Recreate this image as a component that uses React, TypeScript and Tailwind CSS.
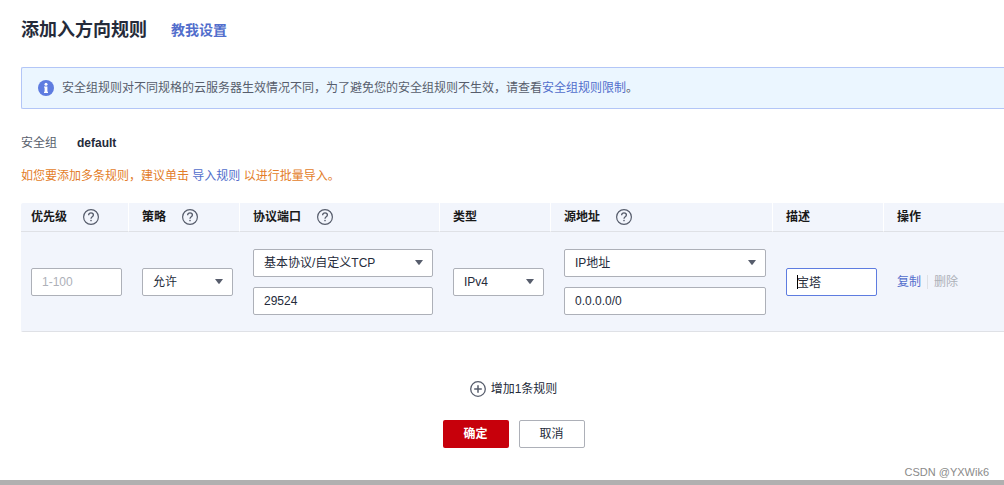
import React, { useState } from 'react';

const fieldClass =
    "h-7 w-full rounded-xs border border-[#adb0b8] bg-white px-2.5 text-xs text-[#252b3a] outline-none placeholder:text-[#adb0b8]";

function HelpIcon() {
    return (
        <svg className="size-4 shrink-0" viewBox="0 0 16 16" fill="none" stroke="#575d6c" aria-hidden="true">
            <circle cx="8" cy="8" r="7.4" strokeWidth="1.2" />
            <path d="M5.6 6.3C5.6 4.7 6.6 3.9 8 3.9s2.4.9 2.4 2.2c0 1.7-2.4 1.8-2.4 3.6" strokeWidth="1.3" />
            <circle cx="8" cy="11.6" r="0.8" fill="#575d6c" stroke="none" />
        </svg>
    );
}

function InfoIcon() {
    return (
        <svg className="size-4 shrink-0" viewBox="0 0 16 16" aria-hidden="true">
            <circle cx="8" cy="8" r="8" fill="#5e7ce0" />
            <circle cx="8" cy="4.2" r="1.5" fill="#fff" />
            <path d="M6 6.4h3.4v5.4h.6V13H6v-1.2h.6V7.6H6z" fill="#fff" />
        </svg>
    );
}

function AddIcon() {
    return (
        <svg className="size-4 shrink-0" viewBox="0 0 16 16" fill="none" stroke="#575d6c" aria-hidden="true">
            <circle cx="8" cy="8" r="7.3" strokeWidth="1.3" />
            <path d="M4.2 8h7.6M8 4.2v7.6" strokeWidth="1.5" />
        </svg>
    );
}

interface SelectFieldProps {
    label: string;
    options: string[];
}

function SelectField({ label, options }: SelectFieldProps) {
    return (
        <div className="grid items-center">
            <select aria-label={label} className={`${fieldClass} col-start-1 row-start-1 appearance-none`}>
                {options.map((option) => (
                    <option key={option}>{option}</option>
                ))}
            </select>
            <svg
                className="pointer-events-none col-start-1 row-start-1 mr-2.5 h-[5px] w-2 justify-self-end"
                viewBox="0 0 8 5"
                aria-hidden="true"
            >
                <path d="M0 0h8L4.6 4.6q-.6.6-1.2 0z" fill="#575d6c" />
            </svg>
        </div>
    );
}

const columns = [
    { title: "优先级", help: true, className: "w-[108px] pl-2.5" },
    { title: "策略", help: true, className: "w-[111px] pl-[13px]" },
    { title: "协议端口", help: true, className: "w-[200px] pl-[13px]" },
    { title: "类型", help: false, className: "w-[111px] pl-[13px]" },
    { title: "源地址", help: true, className: "w-[222px] pl-[13px]" },
    { title: "描述", help: false, className: "w-[111px] pl-[13px]" },
    { title: "操作", help: false, className: "pl-[13px]" },
];

export default function App() {
    const [priority, setPriority] = useState('');
    const [port, setPort] = useState('29524');
    const [source, setSource] = useState('0.0.0.0/0');
    const [description, setDescription] = useState('宝塔');

    return (
        <div className="overflow-hidden bg-white font-['Liberation_Sans','Noto_Sans_CJK_SC',sans-serif] text-xs text-[#252b3a]">
            <main className="pl-[21px]">
                <header className="flex items-center gap-6 pt-4">
                    <h1 className="text-lg font-bold">添加入方向规则</h1>
                    <a href="#guide" className="text-sm font-bold text-[#526ecc]">教我设置</a>
                </header>

                {/* Notice */}
                <div className="mt-[23px] flex h-[42px] items-center gap-2 rounded-l-xs border border-r-0 border-[#b3c6f7] bg-[#ebf6ff] pl-4 text-[#575d6c]">
                    <InfoIcon />
                    <p>
                        安全组规则对不同规格的云服务器生效情况不同，为了避免您的安全组规则不生效，请查看
                        <a href="#limits" className="text-[#526ecc]">安全组规则限制</a>。
                    </p>
                </div>

                <dl className="mt-[26px] flex gap-5">
                    <dt className="text-[#575d6c]">安全组</dt>
                    <dd className="font-bold">default</dd>
                </dl>

                <p className="mt-[17px] text-[#e37d29]">
                    如您要添加多条规则，建议单击 <a href="#import" className="text-[#526ecc]">导入规则</a> 以进行批量导入。
                </p>

                <table className="mt-[19px] w-full table-fixed border-separate border-spacing-0 overflow-hidden rounded-l-xs bg-[#f2f5fc]">
                    <thead>
                        <tr>
                            {columns.map((column) => (
                                <th
                                    key={column.title}
                                    scope="col"
                                    className={`h-[29px] border-b border-[#dfe1e6] p-0 text-left font-bold text-[#191919] not-last:border-r not-last:border-r-white ${column.className}`}
                                >
                                    <div className="flex items-center gap-4">
                                        {column.title}
                                        {column.help && <HelpIcon />}
                                    </div>
                                </th>
                            ))}
                        </tr>
                    </thead>
                    <tbody>
                        <tr className="*:h-[100px] *:border-b *:border-[#dfe1e6] *:py-0 *:pr-[7px] *:pl-[13px]">
                            <td className="first:pl-2.5">
                                <input
                                    aria-label="优先级"
                                    className={fieldClass}
                                    placeholder="1-100"
                                    value={priority}
                                    onChange={(e) => setPriority(e.target.value)}
                                />
                            </td>
                            <td>
                                <SelectField label="策略" options={["允许", "拒绝"]} />
                            </td>
                            <td>
                                <div className="flex flex-col gap-2.5">
                                    <SelectField label="协议" options={["基本协议/自定义TCP", "基本协议/自定义UDP"]} />
                                    <input
                                        aria-label="端口"
                                        className={fieldClass}
                                        value={port}
                                        onChange={(e) => setPort(e.target.value)}
                                    />
                                </div>
                            </td>
                            <td>
                                <SelectField label="类型" options={["IPv4", "IPv6"]} />
                            </td>
                            <td>
                                <div className="flex flex-col gap-2.5">
                                    <SelectField label="源地址类型" options={["IP地址", "安全组"]} />
                                    <input
                                        aria-label="源地址"
                                        className={fieldClass}
                                        value={source}
                                        onChange={(e) => setSource(e.target.value)}
                                    />
                                </div>
                            </td>
                            <td>
                                <div className="grid items-center">
                                    <input
                                        aria-label="描述"
                                        className="col-start-1 row-start-1 h-7 w-full rounded-xs border border-[#5e7ce0] bg-white px-2.5 text-xs text-[#252b3a] caret-transparent outline-none"
                                        value={description}
                                        onChange={(e) => setDescription(e.target.value)}
                                    />
                                    <span className="pointer-events-none col-start-1 row-start-1 ml-[11px] h-3.5 w-px bg-black" />
                                </div>
                            </td>
                            <td>
                                <div className="flex items-center gap-1.5">
                                    <button type="button" className="text-[#526ecc]">复制</button>
                                    <span className="h-3.5 w-px bg-[#dfe1e6]" />
                                    <button type="button" disabled className="text-[#adb0b8]">删除</button>
                                </div>
                            </td>
                        </tr>
                    </tbody>
                </table>

                <footer className="flex flex-col items-center pt-12 pl-0.5">
                    <button type="button" className="flex h-[18px] items-center gap-[5px]">
                        <AddIcon />
                        增加1条规则
                    </button>
                    <div className="mt-[22px] flex gap-2.5">
                        <button type="button" className="h-7 w-[66px] rounded-xs bg-[#c7000b] font-bold text-white">确定</button>
                        <button type="button" className="h-7 w-[66px] rounded-xs border border-[#adb0b8] bg-white">取消</button>
                    </div>
                </footer>
            </main>

            <p className="mt-4 pr-[15px] text-right text-[11px] leading-4 text-[#8a8a8a]">CSDN @YXWik6</p>
            <div className="h-[5px] bg-[#b0b0b0]" />
        </div>
    );
}
